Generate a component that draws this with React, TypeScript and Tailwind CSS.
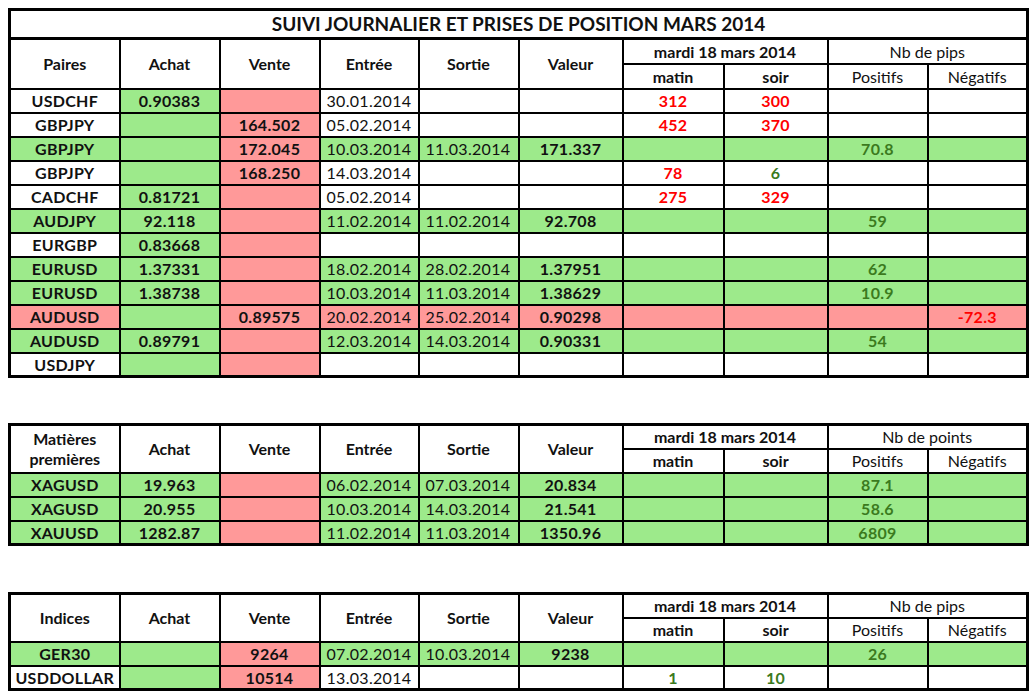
import type { ReactNode } from 'react';

type Tone = 'red' | 'grn';
type Row = {
  bg: 'w' | 'g' | 'r';
  name: string;
  achat?: string;
  vente?: string;
  entree?: string;
  sortie?: string;
  valeur?: string;
  matin?: [string, Tone];
  soir?: [string, Tone];
  pos?: string;
  neg?: string;
};

const bgClass = { w: 'bg-white', g: 'bg-[#9dea8b]', r: 'bg-[#ff9999]' };
const toneClass = { red: 'text-[#ff0000]', grn: 'text-[#3b7a1e]' };

const pairs: Row[] = [
  { bg: 'w', name: 'USDCHF', achat: '0.90383', entree: '30.01.2014', matin: ['312', 'red'], soir: ['300', 'red'] },
  { bg: 'w', name: 'GBPJPY', vente: '164.502', entree: '05.02.2014', matin: ['452', 'red'], soir: ['370', 'red'] },
  { bg: 'g', name: 'GBPJPY', vente: '172.045', entree: '10.03.2014', sortie: '11.03.2014', valeur: '171.337', pos: '70.8' },
  { bg: 'w', name: 'GBPJPY', vente: '168.250', entree: '14.03.2014', matin: ['78', 'red'], soir: ['6', 'grn'] },
  { bg: 'w', name: 'CADCHF', achat: '0.81721', entree: '05.02.2014', matin: ['275', 'red'], soir: ['329', 'red'] },
  { bg: 'g', name: 'AUDJPY', achat: '92.118', entree: '11.02.2014', sortie: '11.02.2014', valeur: '92.708', pos: '59' },
  { bg: 'w', name: 'EURGBP', achat: '0.83668' },
  { bg: 'g', name: 'EURUSD', achat: '1.37331', entree: '18.02.2014', sortie: '28.02.2014', valeur: '1.37951', pos: '62' },
  { bg: 'g', name: 'EURUSD', achat: '1.38738', entree: '10.03.2014', sortie: '11.03.2014', valeur: '1.38629', pos: '10.9' },
  { bg: 'r', name: 'AUDUSD', vente: '0.89575', entree: '20.02.2014', sortie: '25.02.2014', valeur: '0.90298', neg: '-72.3' },
  { bg: 'g', name: 'AUDUSD', achat: '0.89791', entree: '12.03.2014', sortie: '14.03.2014', valeur: '0.90331', pos: '54' },
  { bg: 'w', name: 'USDJPY' },
];

const metals: Row[] = [
  { bg: 'g', name: 'XAGUSD', achat: '19.963', entree: '06.02.2014', sortie: '07.03.2014', valeur: '20.834', pos: '87.1' },
  { bg: 'g', name: 'XAGUSD', achat: '20.955', entree: '10.03.2014', sortie: '14.03.2014', valeur: '21.541', pos: '58.6' },
  { bg: 'g', name: 'XAUUSD', achat: '1282.87', entree: '11.02.2014', sortie: '11.03.2014', valeur: '1350.96', pos: '6809' },
];

const indices: Row[] = [
  { bg: 'g', name: 'GER30', vente: '9264', entree: '07.02.2014', sortie: '10.03.2014', valeur: '9238', pos: '26' },
  { bg: 'w', name: 'USDDOLLAR', vente: '10514', entree: '13.03.2014', matin: ['1', 'grn'], soir: ['10', 'grn'] },
];

// column widths, centre of one rule to the next
const widths = [110, 100, 100, 99, 100, 104, 101, 104, 100, 100];

function Th({ children, rowSpan, colSpan, bold = true }: { children: ReactNode; rowSpan?: number; colSpan?: number; bold?: boolean }) {
  return (
    <th
      rowSpan={rowSpan}
      colSpan={colSpan}
      className={`border-2 border-black p-0 text-center align-middle text-[16px] leading-[19px] ${bold ? 'font-bold' : 'font-normal'}`}
    >
      {children}
    </th>
  );
}

function Td({ children, bg, left, className = '' }: { children?: ReactNode; bg: string; left?: boolean; className?: string }) {
  return (
    <td
      className={`border-2 border-black p-0 align-middle text-[16px] leading-[19px] tracking-[0.3px] ${bg} ${left ? 'pl-[6px] text-left font-normal' : 'text-center font-bold'} ${className}`}
    >
      {children}
    </td>
  );
}

function TradeTable({ title, first, group, rows }: { title?: string; first: ReactNode; group: string; rows: Row[] }) {
  return (
    <table className="w-[1019px] table-fixed border-collapse border-[3px] border-black bg-white text-[#111]">
      <colgroup>
        {widths.map((w, i) => (
          <col key={i} style={{ width: w }} />
        ))}
      </colgroup>
      <thead>
        {title && (
          <tr className="h-[29px]">
            <th colSpan={10} className="border-[3px] border-black p-0 text-center align-middle text-[19px] font-bold leading-[22px]">
              {title}
            </th>
          </tr>
        )}
        <tr className={title ? 'h-[25px]' : 'h-[24px]'}>
          <Th rowSpan={2}>{first}</Th>
          <Th rowSpan={2}>Achat</Th>
          <Th rowSpan={2}>Vente</Th>
          <Th rowSpan={2}>Entrée</Th>
          <Th rowSpan={2}>Sortie</Th>
          <Th rowSpan={2}>Valeur</Th>
          <Th colSpan={2}>mardi 18 mars 2014</Th>
          <Th colSpan={2} bold={false}>{group}</Th>
        </tr>
        <tr className={title ? 'h-[25px]' : 'h-[24px]'}>
          <Th>matin</Th>
          <Th>soir</Th>
          <Th bold={false}>Positifs</Th>
          <Th bold={false}>Négatifs</Th>
        </tr>
      </thead>
      <tbody>
        {rows.map((r, i) => {
          const bg = bgClass[r.bg];
          return (
            <tr key={i} className="h-[24px]">
              <Td bg={bg}>{r.name}</Td>
              <Td bg={bgClass.g}>{r.achat}</Td>
              <Td bg={bgClass.r}>{r.vente}</Td>
              <Td bg={bg} left>{r.entree}</Td>
              <Td bg={bg} left>{r.sortie}</Td>
              <Td bg={bg}>{r.valeur}</Td>
              <Td bg={bg} className={r.matin ? toneClass[r.matin[1]] : ''}>{r.matin?.[0]}</Td>
              <Td bg={bg} className={r.soir ? toneClass[r.soir[1]] : ''}>{r.soir?.[0]}</Td>
              <Td bg={bg} className={toneClass.grn}>{r.pos}</Td>
              <Td bg={bg} className={toneClass.red}>{r.neg}</Td>
            </tr>
          );
        })}
      </tbody>
    </table>
  );
}

export default function App() {
  return (
    <div className="min-h-[700px] bg-white pl-[8px] pt-[8px] font-['Lato','Liberation_Sans',sans-serif]">
      <TradeTable title="SUIVI JOURNALIER ET PRISES DE POSITION MARS 2014" first="Paires" group="Nb de pips" rows={pairs} />
      <div className="h-[45px]" />
      <TradeTable
        first={
          <span className="block leading-[20px]">
            Matières
            <br />
            premières
          </span>
        }
        group="Nb de points"
        rows={metals}
      />
      <div className="h-[46px]" />
      <TradeTable first="Indices" group="Nb de pips" rows={indices} />
    </div>
  );
}
